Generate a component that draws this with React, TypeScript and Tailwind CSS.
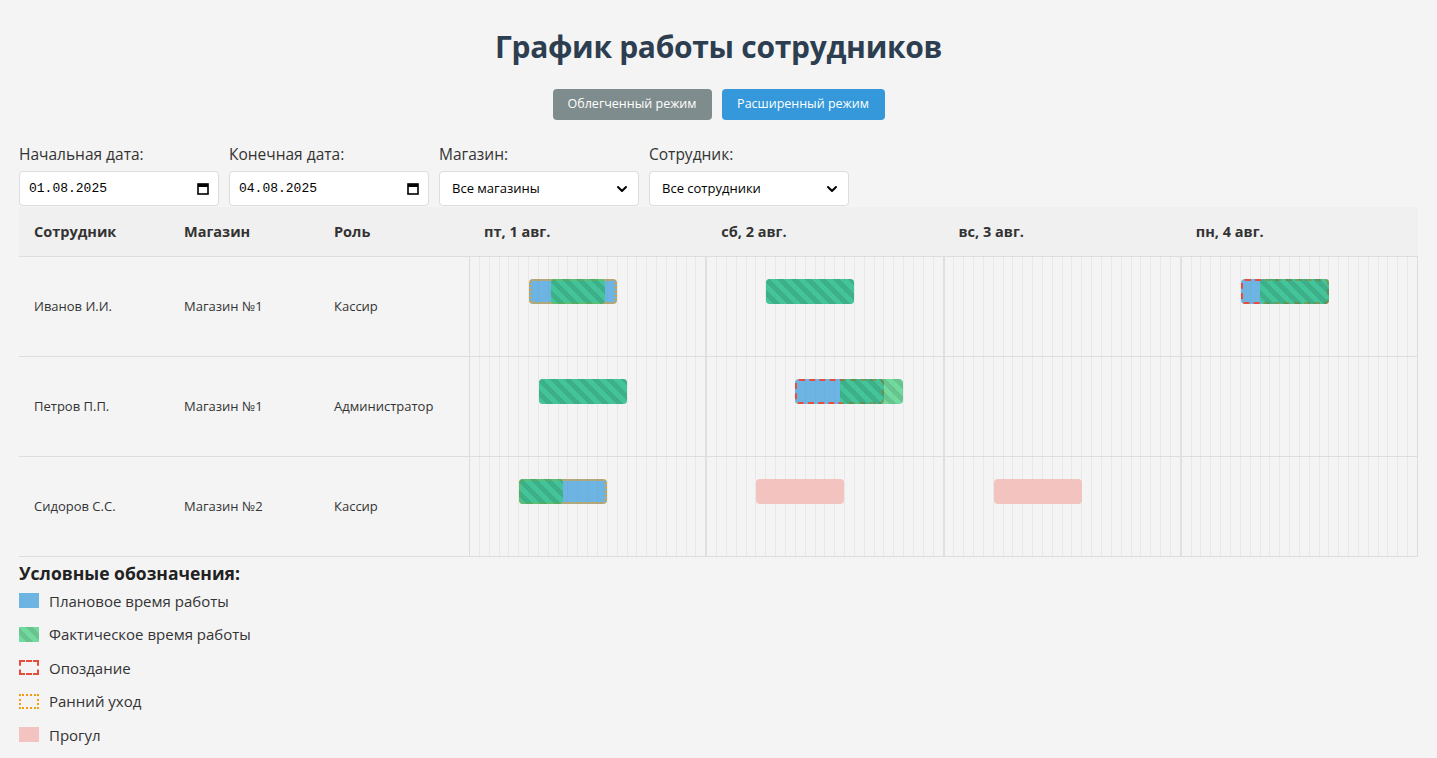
import { ChevronDown } from 'lucide-react';

type Shift = {
  day: number;
  plan?: [number, number];
  fact?: [number, number];
  late?: boolean;
  early?: boolean;
  absent?: boolean;
};

type Employee = {
  name: string;
  store: string;
  role: string;
  shifts: Shift[];
};

const DAYS = ['пт, 1 авг.', 'сб, 2 авг.', 'вс, 3 авг.', 'пн, 4 авг.'];

const EMPLOYEES: Employee[] = [
  {
    name: 'Иванов И.И.',
    store: 'Магазин №1',
    role: 'Кассир',
    shifts: [
      { day: 0, plan: [6, 15], fact: [8.25, 13.75], early: true },
      { day: 1, plan: [6, 15], fact: [6, 15] },
      { day: 3, plan: [6, 15], fact: [8, 15], late: true },
    ],
  },
  {
    name: 'Петров П.П.',
    store: 'Магазин №1',
    role: 'Администратор',
    shifts: [
      { day: 0, plan: [7, 16], fact: [7, 16] },
      { day: 1, plan: [9, 18], fact: [13.5, 20], late: true },
    ],
  },
  {
    name: 'Сидоров С.С.',
    store: 'Магазин №2',
    role: 'Кассир',
    shifts: [
      { day: 0, plan: [5, 14], fact: [5, 9.5], early: true },
      { day: 1, plan: [5, 14], absent: true },
      { day: 2, plan: [5, 14], absent: true },
    ],
  },
];

const HOURS = Array.from({ length: 24 }, (_, i) => i);

// позиция смены внутри дня в процентах
const span = (r: [number, number]) => ({
  left: `${(r[0] / 24) * 100}%`,
  width: `${((r[1] - r[0]) / 24) * 100}%`,
});

const STRIPES =
  'bg-[#2ecc71]/65 bg-[image:repeating-linear-gradient(45deg,transparent,transparent_5px,rgba(0,0,0,0.1)_5px,rgba(0,0,0,0.1)_10px)]';

function DayCell({ shifts, index }: { shifts: Shift[]; index: number }) {
  return (
    <div
      className={`relative flex-1 flex ${
        index === 0 ? 'border-l border-[#dcdcdc]' : 'border-l-2 border-[#e0e0e0]'
      }`}
    >
      {HOURS.map((h) => (
        <div
          key={h}
          className={`flex-1 ${h < 23 ? 'border-r border-[#e8e8e8]' : ''}`}
        />
      ))}
      {shifts.map((s, i) => (
        <div key={i}>
          {s.plan && s.absent && (
            <div
              className="absolute top-[22px] h-[25px] rounded bg-[#f2c3bf]"
              style={span(s.plan)}
            />
          )}
          {s.plan && !s.absent && (
            <div
              className={`absolute top-[22px] h-[25px] rounded bg-[#3498db]/70 ${
                s.late ? 'border-2 border-dashed border-[#e74c3c]' : ''
              } ${s.early ? 'border-2 border-dotted border-[#f39c12]' : ''}`}
              style={span(s.plan)}
            />
          )}
          {s.fact && (
            <div
              className={`absolute top-[22px] h-[25px] rounded ${STRIPES}`}
              style={span(s.fact)}
            />
          )}
        </div>
      ))}
    </div>
  );
}

function FakeDate({ value }: { value: string }) {
  return (
    <div className="h-[35px] bg-white border border-[#ddd] rounded flex items-center justify-between pl-[9px] pr-[9px]">
      <span className="font-['Liberation_Mono',monospace] text-[13px] text-black">{value}</span>
      <svg width="12" height="13" viewBox="0 0 12 13" className="text-black">
        <rect x="1" y="2" width="10" height="10" fill="none" stroke="currentColor" strokeWidth="1.6" />
        <rect x="1" y="2" width="10" height="3" fill="currentColor" />
      </svg>
    </div>
  );
}

function FakeSelect({ value }: { value: string }) {
  return (
    <div className="h-[35px] bg-white border border-[#ddd] rounded flex items-center justify-between pl-3 pr-2">
      <span className="text-[13px] text-black">{value}</span>
      <ChevronDown className="w-4 h-4 text-black" strokeWidth={3} />
    </div>
  );
}

export default function App() {
  return (
    <div className="min-h-[758px] bg-[#f4f4f4] px-[19px] pt-[28px] font-['Open_Sans','Noto_Sans',sans-serif] text-[#333]">
      <h1 className="text-center text-[30px] leading-[38px] font-bold text-[#2c3e50] tracking-[-0.3px]">
        График работы сотрудников
      </h1>

      <div className="flex justify-center gap-[10px] mt-[23px]">
        <button className="h-[31px] w-[159px] rounded bg-[#7f8c8d] text-white text-[12.5px]">
          Облегченный режим
        </button>
        <button className="h-[31px] w-[163px] rounded bg-[#3498db] text-white text-[12.5px]">
          Расширенный режим
        </button>
      </div>

      {/* фильтры */}
      <div className="flex gap-[10px] mt-[24px]">
        {[
          { label: 'Начальная дата:', el: <FakeDate value="01.08.2025" /> },
          { label: 'Конечная дата:', el: <FakeDate value="04.08.2025" /> },
          { label: 'Магазин:', el: <FakeSelect value="Все магазины" /> },
          { label: 'Сотрудник:', el: <FakeSelect value="Все сотрудники" /> },
        ].map((f) => (
          <div key={f.label} className="w-[200px]">
            <div className="text-[15.5px] leading-[20px] mb-[7px] font-medium">{f.label}</div>
            {f.el}
          </div>
        ))}
      </div>

      {/* таблица */}
      <div className="mt-px">
        <div className="flex h-[50px] bg-[#f0f0f0] border-b border-[#ddd] text-[14.5px] font-bold">
          <div className="w-[150px] pl-[15px] flex items-center">Сотрудник</div>
          <div className="w-[150px] pl-[15px] flex items-center">Магазин</div>
          <div className="w-[150px] pl-[15px] flex items-center">Роль</div>
          <div className="flex-1 flex">
            {DAYS.map((d) => (
              <div key={d} className="flex-1 pl-[15px] flex items-center">
                {d}
              </div>
            ))}
          </div>
        </div>
        {EMPLOYEES.map((e) => (
          <div key={e.name} className="flex h-[100px] border-b border-[#ddd] text-[13px]">
            <div className="w-[150px] pl-[15px] flex items-center">{e.name}</div>
            <div className="w-[150px] pl-[15px] flex items-center">{e.store}</div>
            <div className="w-[150px] pl-[15px] flex items-center">{e.role}</div>
            <div className="flex-1 flex border-r border-[#dcdcdc]">
              {DAYS.map((d, i) => (
                <DayCell key={d} index={i} shifts={e.shifts.filter((s) => s.day === i)} />
              ))}
            </div>
          </div>
        ))}
      </div>

      {/* легенда */}
      <div className="mt-[5px]">
        <h3 className="text-[17.5px] leading-[22px] font-bold text-[#222]">Условные обозначения:</h3>
        <div className="flex flex-col">
          {[
            { label: 'Плановое время работы', cls: 'bg-[#3498db]/70' },
            { label: 'Фактическое время работы', cls: STRIPES },
            { label: 'Опоздание', cls: 'border-2 border-dashed border-[#e74c3c]' },
            { label: 'Ранний уход', cls: 'border-2 border-dotted border-[#f39c12]' },
            { label: 'Прогул', cls: 'bg-[#f2c3bf]' },
          ].map((l) => (
            <div key={l.label} className="flex items-center h-[33.5px] text-[15px]">
              <div className={`w-[20px] h-[15px] ${l.cls}`} />
              <span className="ml-[10px]">{l.label}</span>
            </div>
          ))}
        </div>
      </div>
    </div>
  );
}
